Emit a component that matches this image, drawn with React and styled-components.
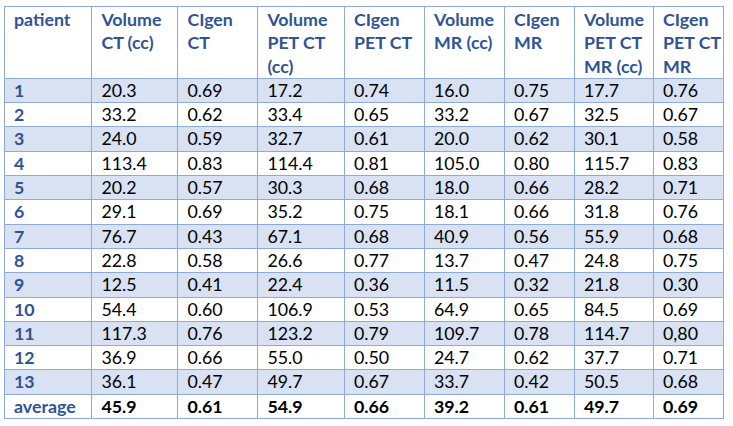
import styled, { createGlobalStyle } from 'styled-components';

const GlobalStyle = createGlobalStyle`
	body {
		margin: 0;
		background: #ffffff;
		font-family: Lato, 'Liberation Sans', sans-serif;
	}
`;

const Page = styled.div`
	padding: 6px 0 0 4px;
`;

const Table = styled.table`
	border-collapse: collapse;
	table-layout: fixed;
	width: 720px;
	font-size: 17.8px;
	line-height: 23.3px;
	color: #000000;
`;

const Col = styled.col`
	width: ${(p) => p.$w}px;
`;

const HeadCell = styled.th`
	border: 1px solid #8eaadb;
	padding: 1px 4px 0 9px;
	text-align: left;
	vertical-align: top;
	font-weight: 700;
	color: #2f5496;
	height: 69px;
`;

const HeadLine = styled.div`
	white-space: nowrap;
`;

const Row = styled.tr`
	background-color: ${(p) => (p.$shaded ? '#d9e2f3' : '#ffffff')};
	height: 24.3px;
`;

const Cell = styled.td`
	border: 1px solid #8eaadb;
	padding: 0 4px 0 9px;
	text-align: left;
	vertical-align: middle;
	white-space: nowrap;
	font-weight: ${(p) => (p.$bold || p.$label ? 700 : 400)};
	color: ${(p) => (p.$label ? '#2f5496' : '#000000')};
`;

const widths = [87.4, 86, 80, 86.6, 80, 80, 70, 79, 70];

const headers = [
	['patient'],
	['Volume', 'CT (cc)'],
	['CIgen', 'CT'],
	['Volume', 'PET CT', '(cc)'],
	['CIgen', 'PET CT'],
	['Volume', 'MR (cc)'],
	['CIgen', 'MR'],
	['Volume', 'PET CT', 'MR (cc)'],
	['CIgen', 'PET CT', 'MR'],
];

const rows = [
	['1', '20.3', '0.69', '17.2', '0.74', '16.0', '0.75', '17.7', '0.76'],
	['2', '33.2', '0.62', '33.4', '0.65', '33.2', '0.67', '32.5', '0.67'],
	['3', '24.0', '0.59', '32.7', '0.61', '20.0', '0.62', '30.1', '0.58'],
	['4', '113.4', '0.83', '114.4', '0.81', '105.0', '0.80', '115.7', '0.83'],
	['5', '20.2', '0.57', '30.3', '0.68', '18.0', '0.66', '28.2', '0.71'],
	['6', '29.1', '0.69', '35.2', '0.75', '18.1', '0.66', '31.8', '0.76'],
	['7', '76.7', '0.43', '67.1', '0.68', '40.9', '0.56', '55.9', '0.68'],
	['8', '22.8', '0.58', '26.6', '0.77', '13.7', '0.47', '24.8', '0.75'],
	['9', '12.5', '0.41', '22.4', '0.36', '11.5', '0.32', '21.8', '0.30'],
	['10', '54.4', '0.60', '106.9', '0.53', '64.9', '0.65', '84.5', '0.69'],
	['11', '117.3', '0.76', '123.2', '0.79', '109.7', '0.78', '114.7', '0,80'],
	['12', '36.9', '0.66', '55.0', '0.50', '24.7', '0.62', '37.7', '0.71'],
	['13', '36.1', '0.47', '49.7', '0.67', '33.7', '0.42', '50.5', '0.68'],
	['average', '45.9', '0.61', '54.9', '0.66', '39.2', '0.61', '49.7', '0.69'],
];

export default function App() {
	return (
		<Page>
			<GlobalStyle />
			<Table>
				<colgroup>
					{widths.map((w, i) => (
						<Col key={i} $w={w} />
					))}
				</colgroup>
				<thead>
					<tr>
						{headers.map((lines, i) => (
							<HeadCell key={i}>
								{lines.map((l, j) => (
									<HeadLine key={j}>{l}</HeadLine>
								))}
							</HeadCell>
						))}
					</tr>
				</thead>
				<tbody>
					{rows.map((row, r) => {
						const isAverage = row[0] === 'average';
						return (
							<Row key={r} $shaded={r % 2 === 0}>
								{row.map((v, c) => (
									<Cell key={c} $label={c === 0} $bold={isAverage}>
										{v}
									</Cell>
								))}
							</Row>
						);
					})}
				</tbody>
			</Table>
		</Page>
	);
}
